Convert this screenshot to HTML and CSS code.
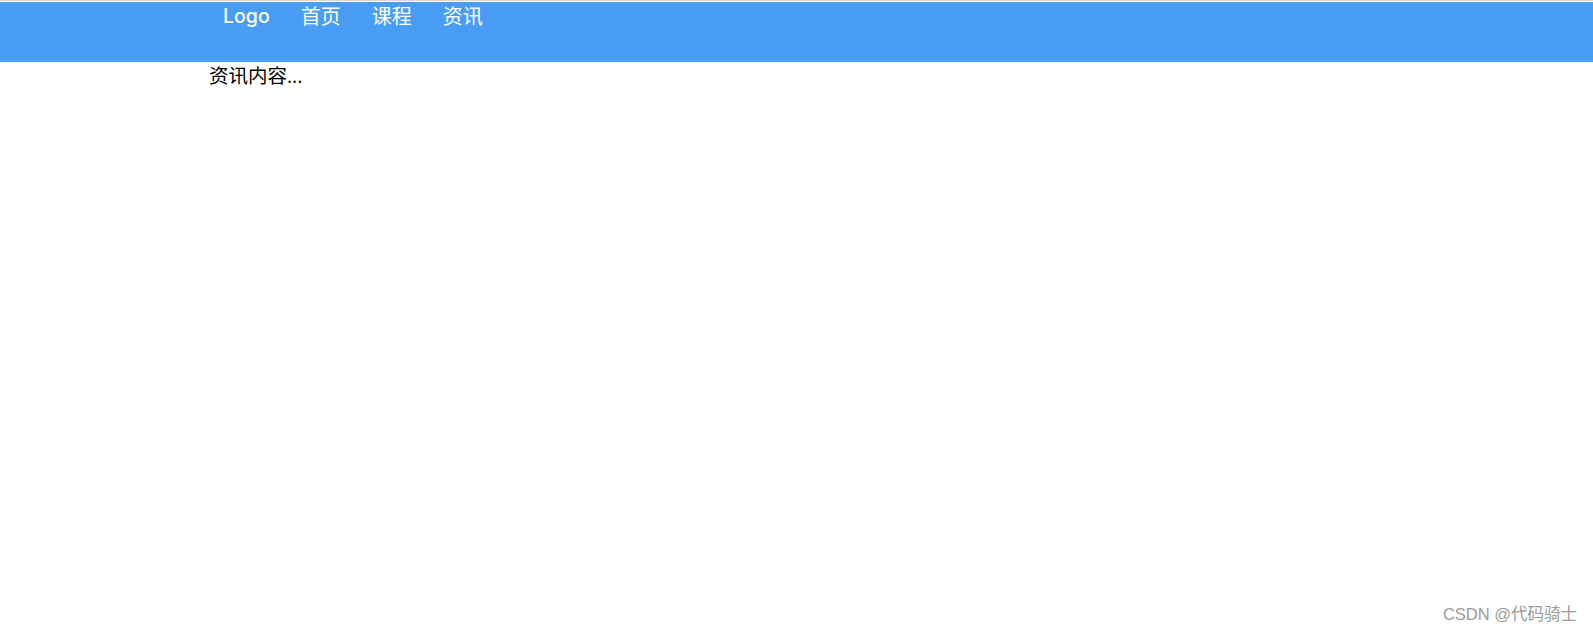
FILE: index.html
```html
<!DOCTYPE html>
<html lang="zh">
<head>
<meta charset="utf-8">
<title>资讯</title>
<link rel="stylesheet" href="styles.css">
</head>
<body>
<div class="topline"></div>
<header class="header">
  <nav class="container nav">
    <a class="nav-item logo" href="#">Logo</a>
    <a class="nav-item" href="#">首页</a>
    <a class="nav-item" href="#">课程</a>
    <a class="nav-item" href="#">资讯</a>
  </nav>
</header>
<main class="container content">资讯内容...</main>
<div class="watermark">CSDN @代码骑士</div>
</body>
</html>
```
FILE: styles.css
```css
html, body {
  margin: 0;
  padding: 0;
  background: #fff;
}
body {
  font-family: "Open Sans", "Noto Sans CJK SC", sans-serif;
  font-size: 19px;
  color: #000;
  height: 632px;
  position: relative;
  overflow: hidden;
}
.topline {
  height: 1px;
  background: #d9d9d9;
  margin-bottom: 1px;
}
.header {
  background: #4a9df4;
  height: 60px;
}
.container {
  width: 1175px;
  margin: 0 auto;
}
.nav {
  display: flex;
  align-items: flex-start;
}
.nav-item {
  color: #fff;
  text-decoration: none;
  font-size: 20px;
  line-height: 29px;
  padding: 0 15.5px;
}
.logo {
  padding-left: 14px;
  font-family: "Inter", "Open Sans", sans-serif;
  font-weight: 500;
  font-size: 19.5px;
}
.content {
  line-height: 28px;
  font-size: 19.5px;
}
.watermark {
  position: absolute;
  right: 16px;
  bottom: 7px;
  font-family: "Liberation Sans", "Noto Sans CJK SC", sans-serif;
  font-size: 16.5px;
  color: #9a9a9a;
}
```
